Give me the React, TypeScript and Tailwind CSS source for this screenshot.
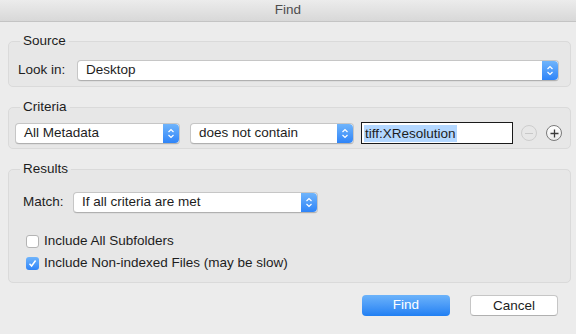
import { ReactNode } from "react";

const font = { fontFamily: '"Liberation Sans", Arial, sans-serif' };

const Stepper = () => (
  <div className="flex h-full w-[16px] shrink-0 items-center justify-center rounded-r-[4px] bg-gradient-to-b from-[#6fb4fb] to-[#2e84f8]">
    <svg width="8" height="13" viewBox="0 0 8 13" fill="none">
      <path d="M1.5 5 L4 2.5 L6.5 5" stroke="white" strokeWidth="1.2" />
      <path d="M1.5 8 L4 10.5 L6.5 8" stroke="white" strokeWidth="1.2" />
    </svg>
  </div>
);

const Popup = ({ label, className }: { label: string; className: string }) => (
  <div
    className={`flex h-[21px] items-stretch rounded-[4px] border border-[#c6c6c6] border-b-[#b0b0b0] bg-white shadow-[0_0.5px_0.5px_rgba(0,0,0,0.08)] ${className}`}
  >
    <span className="flex flex-1 items-center pl-[8px] text-[13.5px] text-[#1d1d1d]">
      {label}
    </span>
    <Stepper />
  </div>
);

const Group = ({
  title,
  className,
  children,
}: {
  title: string;
  className: string;
  children: ReactNode;
}) => (
  <fieldset
    className={`ml-[8px] w-[563px] rounded-[5px] border border-[#dadada] bg-[#e7e7e7] ${className}`}
  >
    <legend className="ml-[11px] px-[3px] text-[13.5px] leading-[16px] text-[#1d1d1d]">
      {title}
    </legend>
    {children}
  </fieldset>
);

const Checkbox = ({ checked, label }: { checked?: boolean; label: string }) => (
  <div className="flex h-[22px] items-center pl-[17px]">
    {checked ? (
      <div className="flex h-[13px] w-[13px] items-center justify-center rounded-[3px] bg-gradient-to-b from-[#6fb4fb] to-[#2e84f8]">
        <svg width="9" height="9" viewBox="0 0 9 9" fill="none">
          <path d="M1.5 4.8 L3.6 7 L7.6 1.5" stroke="white" strokeWidth="1.5" />
        </svg>
      </div>
    ) : (
      <div className="h-[13px] w-[13px] rounded-[3px] border border-[#b4b4b4] bg-white" />
    )}
    <span className="ml-[5px] text-[13.5px] text-[#1d1d1d]">{label}</span>
  </div>
);

export default function App() {
  return (
    <div className="h-[334px] w-[576px] bg-[#ececec]" style={font}>
      <div className="flex h-[22px] items-center justify-center border-b border-[#c4c4c4] bg-gradient-to-b from-[#ececec] to-[#d8d8d8] text-[13.5px] text-[#4d4d4d]">
        Find
      </div>

      <Group title="Source" className="mt-[11px] pb-[5px] pt-[11px]">
        <div className="flex items-center">
          <span className="ml-[9px] w-[59px] text-[13.5px] text-[#1d1d1d]">
            Look in:
          </span>
          <Popup label="Desktop" className="w-[482px]" />
        </div>
      </Group>

      <Group title="Criteria" className="mt-[12px] pb-[4px] pt-[7px]">
        <div className="flex h-[22px] items-center">
          <Popup label="All Metadata" className="ml-[6px] w-[165px]" />
          <Popup label="does not contain" className="ml-[10px] w-[164px]" />
          <div className="ml-[7px] flex h-[22px] w-[152px] items-center border border-[#1a1a1a] bg-white pl-[2px]">
            <span className="bg-[#b3d7ff] px-[1px] text-[13.5px] leading-[17px] text-[#1d1d1d]">
              tiff:XResolution
            </span>
          </div>
          <div className="ml-[8px] flex h-[16px] w-[16px] items-center justify-center rounded-full border border-[#cdcdcd]">
            <div className="h-[1px] w-[8px] bg-[#c8c8c8]" />
          </div>
          <div className="ml-[9px] flex h-[16px] w-[16px] items-center justify-center rounded-full border border-[#7a7a7a] bg-gradient-to-b from-white to-[#ececec]">
            <svg width="9" height="9" viewBox="0 0 9 9">
              <path d="M4.5 0.5 V8.5 M0.5 4.5 H8.5" stroke="#3c3c3c" strokeWidth="1.3" />
            </svg>
          </div>
        </div>
      </Group>

      <Group title="Results" className="mt-[12px] pb-[8px] pt-[15px]">
        <div className="flex items-center">
          <span className="ml-[14px] w-[50px] text-[13.5px] text-[#1d1d1d]">
            Match:
          </span>
          <Popup label="If all criteria are met" className="w-[245px]" />
        </div>
        <div className="mt-[17px]">
          <Checkbox label="Include All Subfolders" />
          <Checkbox checked label="Include Non-indexed Files (may be slow)" />
        </div>
      </Group>

      <div className="mt-[12px] flex justify-end gap-[20px] pr-[18px]">
        <button className="h-[21px] w-[88px] rounded-[4px] bg-gradient-to-b from-[#6cb3fa] to-[#1f7ff3] text-[13.5px] text-white">
          Find
        </button>
        <button className="h-[21px] w-[88px] rounded-[4px] border border-[#c6c6c6] border-b-[#b0b0b0] bg-white text-[13.5px] text-[#1d1d1d]">
          Cancel
        </button>
      </div>
    </div>
  );
}
